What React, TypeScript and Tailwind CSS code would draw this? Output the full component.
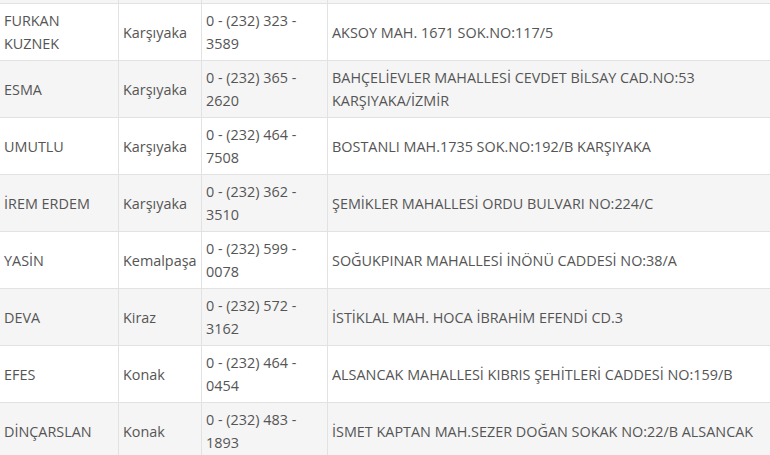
const rows = [
  { name: "FURKAN KUZNEK", district: "Karşıyaka", phone: "0 - (232) 323 - 3589", address: "AKSOY MAH. 1671 SOK.NO:117/5" },
  { name: "ESMA", district: "Karşıyaka", phone: "0 - (232) 365 - 2620", address: "BAHÇELİEVLER MAHALLESİ CEVDET BİLSAY CAD.NO:53 KARŞIYAKA/İZMİR" },
  { name: "UMUTLU", district: "Karşıyaka", phone: "0 - (232) 464 - 7508", address: "BOSTANLI MAH.1735 SOK.NO:192/B KARŞIYAKA" },
  { name: "İREM ERDEM", district: "Karşıyaka", phone: "0 - (232) 362 - 3510", address: "ŞEMİKLER MAHALLESİ ORDU BULVARI NO:224/C" },
  { name: "YASİN", district: "Kemalpaşa", phone: "0 - (232) 599 - 0078", address: "SOĞUKPINAR MAHALLESİ İNÖNÜ CADDESİ NO:38/A" },
  { name: "DEVA", district: "Kiraz", phone: "0 - (232) 572 - 3162", address: "İSTİKLAL MAH. HOCA İBRAHİM EFENDİ CD.3" },
  { name: "EFES", district: "Konak", phone: "0 - (232) 464 - 0454", address: "ALSANCAK MAHALLESİ KIBRIS ŞEHİTLERİ CADDESİ NO:159/B" },
  { name: "DİNÇARSLAN", district: "Konak", phone: "0 - (232) 483 - 1893", address: "İSMET KAPTAN MAH.SEZER DOĞAN SOKAK NO:22/B ALSANCAK" },
];

export default function App() {
  return (
    <div
      className="w-[770px] h-[455px] overflow-hidden bg-white text-[14.4px] leading-[23px] text-[#555]"
      style={{ fontFamily: '"Open Sans", "Liberation Sans", sans-serif' }}
    >
      {/* tail of the previous row */}
      <div className="grid grid-cols-[118px_83px_126px_1fr] h-[3px] bg-[#f5f5f5]">
        <div />
        <div className="border-l border-[#e2e2e2]" />
        <div className="border-l border-[#e2e2e2]" />
        <div className="border-l border-[#e2e2e2]" />
      </div>
      {rows.map((r, i) => (
        <div
          key={r.name}
          className={
            "grid grid-cols-[118px_83px_126px_1fr] border-t border-[#e2e2e2] " +
            (i % 2 === 1 ? "bg-[#f5f5f5]" : "bg-white")
          }
        >
          <div className="flex items-center min-h-[56px] px-[4px] py-[5px]">{r.name}</div>
          <div className="flex items-center pl-[4px] py-[5px] border-l border-[#e2e2e2]">{r.district}</div>
          <div className="flex items-center px-[4px] py-[5px] border-l border-[#e2e2e2]">{r.phone}</div>
          <div className="flex items-center px-[4px] py-[5px] border-l border-[#e2e2e2]">{r.address}</div>
        </div>
      ))}
    </div>
  );
}
